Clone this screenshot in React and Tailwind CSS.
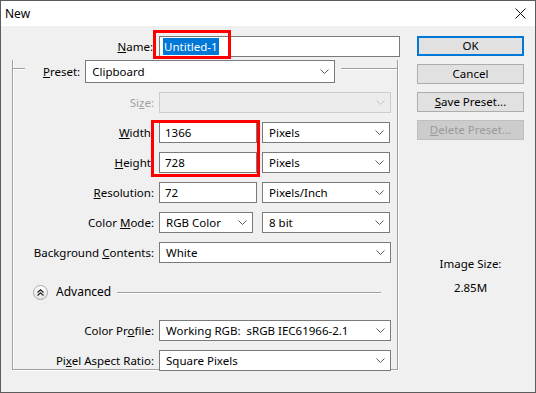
import React from 'react'

const font = { fontFamily: '"Noto Sans", "Liberation Sans", sans-serif' }

function Chevron({ disabled }) {
  return (
    <svg width="9" height="5" viewBox="0 0 9 5" className="shrink-0">
      <polyline
        points="0.5,0.5 4.5,4.5 8.5,0.5"
        fill="none"
        stroke={disabled ? '#c4c4c4' : '#5a5a5a'}
        strokeWidth="1"
      />
    </svg>
  )
}

function Select({ value, className = '', disabled }) {
  return (
    <div
      className={`h-[21px] flex items-center justify-between border pl-[6px] pr-[5px] ${
        disabled ? 'bg-[#ececec] border-[#cccccc]' : 'bg-white border-[#7a7a7a]'
      } ${className}`}
    >
      <span className="leading-none whitespace-pre">{value}</span>
      <Chevron disabled={disabled} />
    </div>
  )
}

function Input({ value, className = '' }) {
  return (
    <div className={`h-[21px] flex items-center bg-white border border-[#7a7a7a] pl-[5px] ${className}`}>
      <span className="leading-none">{value}</span>
    </div>
  )
}

function Label({ children, disabled }) {
  return (
    <div className={`w-[146px] shrink-0 text-right pr-[5px] ${disabled ? 'text-[#a0a0a0]' : ''}`}>
      {children}
    </div>
  )
}

function Row({ children }) {
  return <div className="h-[21px] flex items-center">{children}</div>
}

function Btn({ children, primary, disabled }) {
  return (
    <div
      className={`h-[20px] flex items-center justify-center ${
        primary
          ? 'border-2 border-[#0078d7] bg-[#e1e1e1]'
          : disabled
          ? 'border border-[#bfbfbf] bg-[#cccccc] text-[#9a9a9a]'
          : 'border border-[#adadad] bg-[#e1e1e1]'
      }`}
    >
      {children}
    </div>
  )
}

export default function App() {
  return (
    <div
      className="relative w-[536px] h-[393px] border border-[#5c5c5c] bg-[#f0f0f0] text-[11.5px] text-black flex flex-col overflow-hidden"
      style={font}
    >
      {/* title bar */}
      <div className="h-[25px] bg-white flex items-center justify-between pl-[4px] pr-[9px] text-[12px]">
        <span>New</span>
        <svg width="11" height="11" viewBox="0 0 11 11">
          <path d="M0.5 0.5 L10.5 10.5 M10.5 0.5 L0.5 10.5" stroke="#111" strokeWidth="1" />
        </svg>
      </div>

      <div className="flex flex-1">
        {/* left side */}
        <div className="w-[404px] pt-[10px]">
          <div className="h-[21px] flex items-center">
            <div className="w-[153px] text-right pr-[1px]">
              <span className="underline">N</span>ame:
            </div>
            <div className="ml-[5px] w-[241px] h-[21px] flex items-center bg-white border border-[#7a7a7a] pl-[3px]">
              <span className="bg-[#0078d7] text-white px-[1px] leading-[17px]">Untitled-1</span>
            </div>
          </div>

          {/* group box */}
          <div className="ml-[11px] mt-[11px] w-[386px] h-[310px] border-l border-r border-b border-[#a0a0a0] shadow-[inset_1px_0_0_white,1px_1px_0_white]">
            <div className="-mt-[8px] h-[23px] flex items-start">
              <div className="w-[12px] mt-[8px] border-t border-[#a0a0a0] shadow-[0_1px_0_white]" />
              <div className="ml-[18px] h-[23px] flex items-center">
                <span className="underline">P</span>reset:
              </div>
              <Select value="Clipboard" className="ml-[5px] w-[250px] h-[23px]" />
              <div className="flex-1 ml-[6px] mt-[8px] border-t border-[#a0a0a0] shadow-[0_1px_0_white]" />
            </div>

            <div className="mt-[9px] flex flex-col gap-[9px]">
              <Row>
                <Label disabled>
                  Si<span className="underline">z</span>e:
                </Label>
                <Select value="" disabled className="w-[232px]" />
              </Row>
              <Row>
                <Label>
                  <span className="underline">W</span>idth:
                </Label>
                <Input value="1366" className="w-[98px]" />
                <Select value="Pixels" className="ml-[5px] w-[128px]" />
              </Row>
              <Row>
                <Label>
                  <span className="underline">H</span>eight:
                </Label>
                <Input value="728" className="w-[98px]" />
                <Select value="Pixels" className="ml-[5px] w-[128px]" />
              </Row>
              <Row>
                <Label>
                  <span className="underline">R</span>esolution:
                </Label>
                <Input value="72" className="w-[98px]" />
                <Select value="Pixels/Inch" className="ml-[5px] w-[128px]" />
              </Row>
              <Row>
                <Label>
                  Color <span className="underline">M</span>ode:
                </Label>
                <Select value="RGB Color" className="w-[94px]" />
                <Select value="8 bit" className="ml-[9px] w-[128px]" />
              </Row>
              <Row>
                <Label>
                  Background <span className="underline">C</span>ontents:
                </Label>
                <Select value="White" className="w-[232px]" />
              </Row>
            </div>

            {/* advanced */}
            <div className="mt-[22px] h-[14px] flex items-center pl-[20px] pr-[16px]">
              <div className="w-[15px] h-[15px] rounded-full border border-[#a8a8a8] bg-gradient-to-b from-white to-[#e4e4e4] flex items-center justify-center">
                <svg width="7" height="7" viewBox="0 0 7 7">
                  <polyline points="0.5,3.5 3.5,0.8 6.5,3.5" fill="none" stroke="#222" strokeWidth="1.2" />
                  <polyline points="0.5,6.5 3.5,3.8 6.5,6.5" fill="none" stroke="#222" strokeWidth="1.2" />
                </svg>
              </div>
              <span className="ml-[8px] text-[12px]">Advanced</span>
              <div className="flex-1 ml-[6px] border-t border-[#a0a0a0] shadow-[0_1px_0_white]" />
            </div>

            <div className="mt-[21px] flex flex-col gap-[9px]">
              <Row>
                <Label>
                  Color Pr<span className="underline">o</span>file:
                </Label>
                <Select value="Working RGB:  sRGB IEC61966-2.1" className="w-[232px]" />
              </Row>
              <Row>
                <Label>
                  Pi<span className="underline">x</span>el Aspect Ratio:
                </Label>
                <Select value="Square Pixels" className="w-[232px]" />
              </Row>
            </div>
          </div>
        </div>

        {/* right side */}
        <div className="ml-[12px] w-[107px] pt-[10px] flex flex-col">
          <div className="flex flex-col gap-[8px]">
            <Btn primary>OK</Btn>
            <Btn>Cancel</Btn>
            <Btn>
              <span>
                <span className="underline">S</span>ave Preset...
              </span>
            </Btn>
            <Btn disabled>
              <span>
                <span className="underline">D</span>elete Preset...
              </span>
            </Btn>
          </div>
          <div className="mt-[116px] text-center leading-[16px]">Image Size:</div>
          <div className="mt-[8px] text-center leading-[16px]">2.85M</div>
        </div>
      </div>

      {/* red annotation boxes */}
      <div className="absolute left-[152px] top-[29px] w-[78px] h-[29px] border-[3px] border-[#ff0000]" />
      <div className="absolute left-[150px] top-[119px] w-[109px] h-[57px] border-[3px] border-[#ff0000]" />
    </div>
  )
}
